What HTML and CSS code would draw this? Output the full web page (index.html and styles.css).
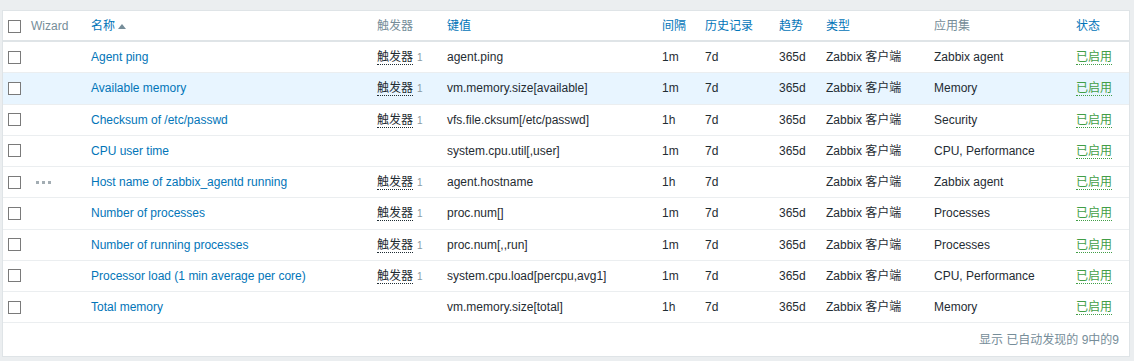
FILE: index.html
```html
<!DOCTYPE html>
<html lang="zh-CN">
<head>
<meta charset="utf-8">
<title>Items</title>
<link rel="stylesheet" href="styles.css">
</head>
<body>
<div class="panel">
  <table class="list">
    <colgroup>
      <col class="c-cb"><col class="c-wiz"><col class="c-name"><col class="c-trig"><col class="c-key"><col class="c-int"><col class="c-hist"><col class="c-trend"><col class="c-type"><col class="c-app"><col class="c-status">
    </colgroup>
    <thead>
      <tr>
        <th><span class="cb"></span></th>
        <th class="muted">Wizard</th>
        <th><a class="hlink">名称</a><span class="arrow"></span></th>
        <th class="muted">触发器</th>
        <th><a class="hlink">键值</a></th>
        <th><a class="hlink">间隔</a></th>
        <th><a class="hlink">历史记录</a></th>
        <th><a class="hlink">趋势</a></th>
        <th><a class="hlink">类型</a></th>
        <th class="muted">应用集</th>
        <th><a class="hlink">状态</a></th>
      </tr>
    </thead>
    <tbody>
      <tr>
        <td><span class="cb"></span></td><td></td>
        <td><a class="link">Agent ping</a></td>
        <td><span class="trig">触发器</span><sup class="cnt">1</sup></td>
        <td>agent.ping</td><td>1m</td><td>7d</td><td>365d</td><td>Zabbix 客户端</td><td>Zabbix agent</td>
        <td><span class="ok">已启用</span></td>
      </tr>
      <tr class="hover">
        <td><span class="cb"></span></td><td></td>
        <td><a class="link">Available memory</a></td>
        <td><span class="trig">触发器</span><sup class="cnt">1</sup></td>
        <td>vm.memory.size[available]</td><td>1m</td><td>7d</td><td>365d</td><td>Zabbix 客户端</td><td>Memory</td>
        <td><span class="ok">已启用</span></td>
      </tr>
      <tr>
        <td><span class="cb"></span></td><td></td>
        <td><a class="link">Checksum of /etc/passwd</a></td>
        <td><span class="trig">触发器</span><sup class="cnt">1</sup></td>
        <td>vfs.file.cksum[/etc/passwd]</td><td>1h</td><td>7d</td><td>365d</td><td>Zabbix 客户端</td><td>Security</td>
        <td><span class="ok">已启用</span></td>
      </tr>
      <tr>
        <td><span class="cb"></span></td><td></td>
        <td><a class="link">CPU user time</a></td>
        <td></td>
        <td>system.cpu.util[,user]</td><td>1m</td><td>7d</td><td>365d</td><td>Zabbix 客户端</td><td>CPU, Performance</td>
        <td><span class="ok">已启用</span></td>
      </tr>
      <tr>
        <td><span class="cb"></span></td><td><span class="dots"><i></i><i></i><i></i></span></td>
        <td><a class="link">Host name of zabbix_agentd running</a></td>
        <td><span class="trig">触发器</span><sup class="cnt">1</sup></td>
        <td>agent.hostname</td><td>1h</td><td>7d</td><td></td><td>Zabbix 客户端</td><td>Zabbix agent</td>
        <td><span class="ok">已启用</span></td>
      </tr>
      <tr>
        <td><span class="cb"></span></td><td></td>
        <td><a class="link">Number of processes</a></td>
        <td><span class="trig">触发器</span><sup class="cnt">1</sup></td>
        <td>proc.num[]</td><td>1m</td><td>7d</td><td>365d</td><td>Zabbix 客户端</td><td>Processes</td>
        <td><span class="ok">已启用</span></td>
      </tr>
      <tr>
        <td><span class="cb"></span></td><td></td>
        <td><a class="link">Number of running processes</a></td>
        <td><span class="trig">触发器</span><sup class="cnt">1</sup></td>
        <td>proc.num[,,run]</td><td>1m</td><td>7d</td><td>365d</td><td>Zabbix 客户端</td><td>Processes</td>
        <td><span class="ok">已启用</span></td>
      </tr>
      <tr>
        <td><span class="cb"></span></td><td></td>
        <td><a class="link">Processor load (1 min average per core)</a></td>
        <td><span class="trig">触发器</span><sup class="cnt">1</sup></td>
        <td>system.cpu.load[percpu,avg1]</td><td>1m</td><td>7d</td><td>365d</td><td>Zabbix 客户端</td><td>CPU, Performance</td>
        <td><span class="ok">已启用</span></td>
      </tr>
      <tr>
        <td><span class="cb"></span></td><td></td>
        <td><a class="link">Total memory</a></td>
        <td></td>
        <td>vm.memory.size[total]</td><td>1h</td><td>7d</td><td>365d</td><td>Zabbix 客户端</td><td>Memory</td>
        <td><span class="ok">已启用</span></td>
      </tr>
    </tbody>
  </table>
  <div class="footer">显示 已自动发现的 9中的9</div>
</div>
</body>
</html>
```

FILE: styles.css
```css
html, body {
  margin: 0;
  padding: 0;
  background: #ebeef0;
  font-family: "Liberation Sans", Arial, "Noto Sans CJK SC", sans-serif;
  font-size: 12px;
  color: #1f2c33;
}

.panel {
  margin: 10px 0 0 2px;
  width: 1126px;
  background: #ffffff;
  border: 1px solid #dfe4e7;
}

.list {
  width: 1126px;
  table-layout: fixed;
  border-collapse: collapse;
}

.c-cb { width: 23px; }
.c-wiz { width: 60px; }
.c-name { width: 286px; }
.c-trig { width: 70px; }
.c-key { width: 215px; }
.c-int { width: 43px; }
.c-hist { width: 74px; }
.c-trend { width: 47px; }
.c-type { width: 108px; }
.c-app { width: 142px; }
.c-status { width: 58px; }

.list th {
  text-align: left;
  font-weight: normal;
  padding: 8px 5px 7px 5px;
  height: 14px;
  line-height: 14px;
  border-bottom: 2px solid #dfe4e7;
  white-space: nowrap;
  vertical-align: middle;
}

.list th.muted {
  color: #768d99;
}

.list td {
  padding: 8px 5px;
  height: 14.25px;
  line-height: 14px;
  border-bottom: 1px solid #ebeef0;
  white-space: nowrap;
  overflow: hidden;
  vertical-align: middle;
}

.list tr.hover td {
  background: #e8f5ff;
}

.hlink, .link {
  color: #0275b8;
  text-decoration: none;
}

.arrow {
  display: inline-block;
  width: 0;
  height: 0;
  margin-left: 3px;
  border-left: 4px solid transparent;
  border-right: 4px solid transparent;
  border-bottom: 5px solid #768d99;
  vertical-align: 1px;
}

.cb {
  display: block;
  width: 11px;
  height: 11px;
  border: 1px solid #7a7a7a;
  background: #fff;
}

.trig {
  border-bottom: 1px dotted #1f2c33;
  color: #1f2c33;
}

.cnt {
  font-size: 10px;
  line-height: 10px;
  color: #8a9aa3;
  vertical-align: baseline;
  margin-left: 4px;
}

.ok {
  color: #429e47;
  border-bottom: 1px dotted #429e47;
}

.dots {
  display: flex;
  gap: 3px;
  margin-left: 5px;
}

.dots i {
  display: block;
  width: 3px;
  height: 3px;
  background: #a3adb3;
}

.footer {
  text-align: right;
  color: #768d99;
  padding: 10px 10px 9px 0;
  line-height: 14px;
}
```
